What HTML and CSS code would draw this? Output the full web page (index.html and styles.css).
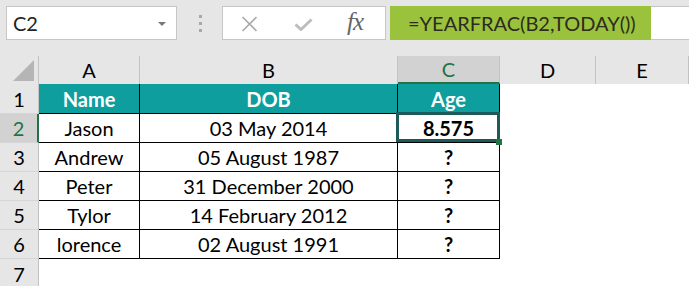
FILE: index.html
```html
<!DOCTYPE html>
<html>
<head>
<meta charset="utf-8">
<link rel="stylesheet" href="styles.css">
</head>
<body>
<div class="app">
  <div class="toolbar">
    <div class="namebox"><span class="ref">C2</span><span class="caret"></span></div>
    <div class="grip"><i></i><i></i><i></i></div>
    <div class="fbtns">
      <svg class="ico-x" width="17" height="16" viewBox="0 0 17 16"><path d="M1.5 1 L15.5 15 M15.5 1 L1.5 15" stroke="#a8a8a8" stroke-width="1.6" fill="none"/></svg>
      <svg class="ico-check" width="19" height="13" viewBox="0 0 19 13"><path d="M1.5 6.5 L7 11.5 L17.5 1.5" stroke="#bdbdbd" stroke-width="3" fill="none"/></svg>
      <span class="fx">fx</span>
    </div>
    <div class="finput"><div class="fhl">=YEARFRAC(B2,TODAY())</div></div>
  </div>
  <div class="sheet">
    <div class="corner"><svg width="21" height="21" viewBox="0 0 21 21"><path d="M21 0 L21 21 L0 21 Z" fill="#b5b5b5"/></svg></div>
    <div class="ch">A</div><div class="ch">B</div><div class="ch sel-c">C</div><div class="ch">D</div><div class="ch">E</div>

    <div class="rh">1</div><div class="th">Name</div><div class="th">DOB</div><div class="th">Age</div><div class="e"></div><div class="e"></div>
    <div class="rh sel-r">2</div><div class="td">Jason</div><div class="td">03 May 2014</div><div class="td b active">8.575</div><div class="e"></div><div class="e"></div>
    <div class="rh">3</div><div class="td">Andrew</div><div class="td">05 August 1987</div><div class="td b">?</div><div class="e"></div><div class="e"></div>
    <div class="rh">4</div><div class="td">Peter</div><div class="td">31 December 2000</div><div class="td b">?</div><div class="e"></div><div class="e"></div>
    <div class="rh">5</div><div class="td">Tylor</div><div class="td">14 February 2012</div><div class="td b">?</div><div class="e"></div><div class="e"></div>
    <div class="rh">6</div><div class="td">lorence</div><div class="td">02 August 1991</div><div class="td b">?</div><div class="e"></div><div class="e"></div>
    <div class="rh last">7</div><div class="e"></div><div class="e"></div><div class="e"></div><div class="e"></div><div class="e"></div>
  </div>
</div>
</body>
</html>
```
FILE: styles.css
```css
* { box-sizing: border-box; }
html, body { margin: 0; padding: 0; background: #fff; }
.app { width: 689px; height: 286px; overflow: hidden; font-family: Lato, "Liberation Sans", sans-serif; color: #000; }

.toolbar { height: 56px; background: #e6e6e6; display: flex; align-items: flex-start; padding: 6px 0 0 6px; }
.namebox { width: 171px; height: 34px; background: #fff; border: 1px solid #c6c6c6; display: flex; align-items: center; padding-left: 6px; font-size: 20px; color: #222; }
.caret { margin-left: auto; margin-right: 10px; width: 0; height: 0; border-left: 4px solid transparent; border-right: 4px solid transparent; border-top: 4px solid #777; margin-top: 1px; }
.grip { width: 45px; height: 34px; display: flex; flex-direction: column; align-items: center; justify-content: center; gap: 4px; padding-left: 2px; }
.grip i { display: block; width: 3px; height: 3px; background: #a8a8a8; }
.fbtns { width: 164px; height: 34px; background: #fff; border: 1px solid #c6c6c6; display: flex; align-items: center; }
.ico-x { margin-left: 18px; margin-top: 2px; }
.ico-check { margin-left: 36px; margin-top: 3px; }
.fx { margin-left: 34px; font-family: "Liberation Serif", serif; font-style: italic; font-size: 25px; color: #666; margin-top: -3px; letter-spacing: -1px; }
.finput { flex: 1; height: 34px; margin-left: 4px; background: #fff; border-top: 1px solid #c6c6c6; border-bottom: 1px solid #c6c6c6; }
.fhl { width: 261px; height: 34px; margin-top: -1px; background: #9bc23c; display: flex; align-items: center; padding-left: 18px; font-size: 20px; color: #2c2c20; }

.sheet { display: grid; grid-template-columns: 39px 101px 258px 102px 96px 93px; grid-template-rows: 28px 30px repeat(6, 29px); font-size: 20px; }
.sheet > div { display: flex; align-items: center; justify-content: center; }
.corner { background: #e6e6e6; border-right: 1px solid #c3c3c3; justify-content: flex-end !important; align-items: flex-end !important; padding: 0 4px 3px 0; }
.ch { background: #e6e6e6; border-right: 1px solid #c3c3c3; }
.ch.sel-c { background: #d2d2d2; color: #217346; border-bottom: 2px solid #217346; }
.rh { background: #e6e6e6; border-right: 1px solid #c3c3c3; border-bottom: 1px solid #d5d5d5; }
.rh.last { border-bottom: none; }
.rh.sel-r { background: #d2d2d2; color: #217346; border-right: 2px solid #217346; }
.th { background: #0e9e9e; color: #fff; font-weight: 700; border-right: 1px solid #000; border-bottom: 1px solid #000; }
.td { background: #fff; border-right: 1px solid #000; border-bottom: 1px solid #000; }
.td.b { font-weight: 700; }
.e { background: #fff; }
.active { position: relative; }
.active::after { content: ""; position: absolute; left: -2px; top: -2px; right: -1px; bottom: 0; border: 3px solid #1d5a5a; }
.active::before { content: ""; position: absolute; left: 98px; top: 25px; width: 6px; height: 6px; background: #217346; z-index: 2; }
```
